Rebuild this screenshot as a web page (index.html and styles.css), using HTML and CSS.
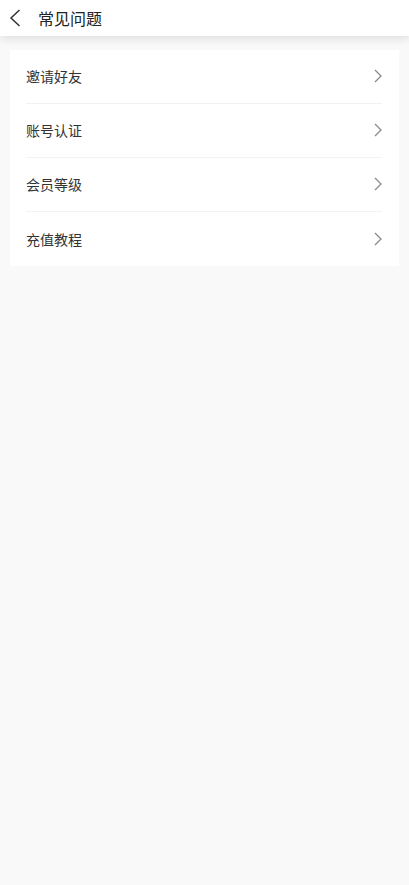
FILE: index.html
```html
<!DOCTYPE html>
<html lang="zh-CN">
<head>
  <meta charset="UTF-8">
  <meta name="viewport" content="width=device-width, initial-scale=1">
  <title>常见问题</title>
  <link rel="stylesheet" href="styles.css">
</head>
<body>
  <div class="header">
    <svg class="back" width="12" height="18" viewBox="0 0 12 18">
      <path d="M10.5 1 L2 9 L10.5 17" fill="none" stroke="#333" stroke-width="1.5"/>
    </svg>
    <span class="title">常见问题</span>
  </div>

  <div class="card">
    <div class="row"><span>邀请好友</span><svg class="arrow" width="8" height="14" viewBox="0 0 8 14"><path d="M1 1 L7 7 L1 13" fill="none" stroke="#8a8a8a" stroke-width="1.3"/></svg></div>
    <div class="row"><span>账号认证</span><svg class="arrow" width="8" height="14" viewBox="0 0 8 14"><path d="M1 1 L7 7 L1 13" fill="none" stroke="#8a8a8a" stroke-width="1.3"/></svg></div>
    <div class="row"><span>会员等级</span><svg class="arrow" width="8" height="14" viewBox="0 0 8 14"><path d="M1 1 L7 7 L1 13" fill="none" stroke="#8a8a8a" stroke-width="1.3"/></svg></div>
    <div class="row"><span>充值教程</span><svg class="arrow" width="8" height="14" viewBox="0 0 8 14"><path d="M1 1 L7 7 L1 13" fill="none" stroke="#8a8a8a" stroke-width="1.3"/></svg></div>
  </div>
</body>
</html>
```

FILE: styles.css
```css
body {
  margin: 0;
  background: #f9f9f9;
  font-family: "Noto Sans CJK SC", "Noto Sans", sans-serif;
  min-height: 100vh;
}
.header {
  height: 36px;
  background: #fff;
  display: flex;
  align-items: center;
  padding-left: 9px;
  box-shadow: 0 3px 8px rgba(0, 0, 0, 0.1);
  position: relative;
}
.back {
  margin-right: 17px;
}
.title {
  font-size: 16px;
  color: #222;
}
.card {
  margin: 14px 10px 0;
  background: #fff;
  padding: 0 17px 0 16px;
}
.row {
  height: 54px;
  display: flex;
  align-items: center;
  justify-content: space-between;
  font-size: 14px;
  color: #333;
  border-bottom: 1px solid #f2f2f2;
  box-sizing: border-box;
  padding-bottom: 1px;
}
.row:last-child {
  border-bottom: none;
}
```
